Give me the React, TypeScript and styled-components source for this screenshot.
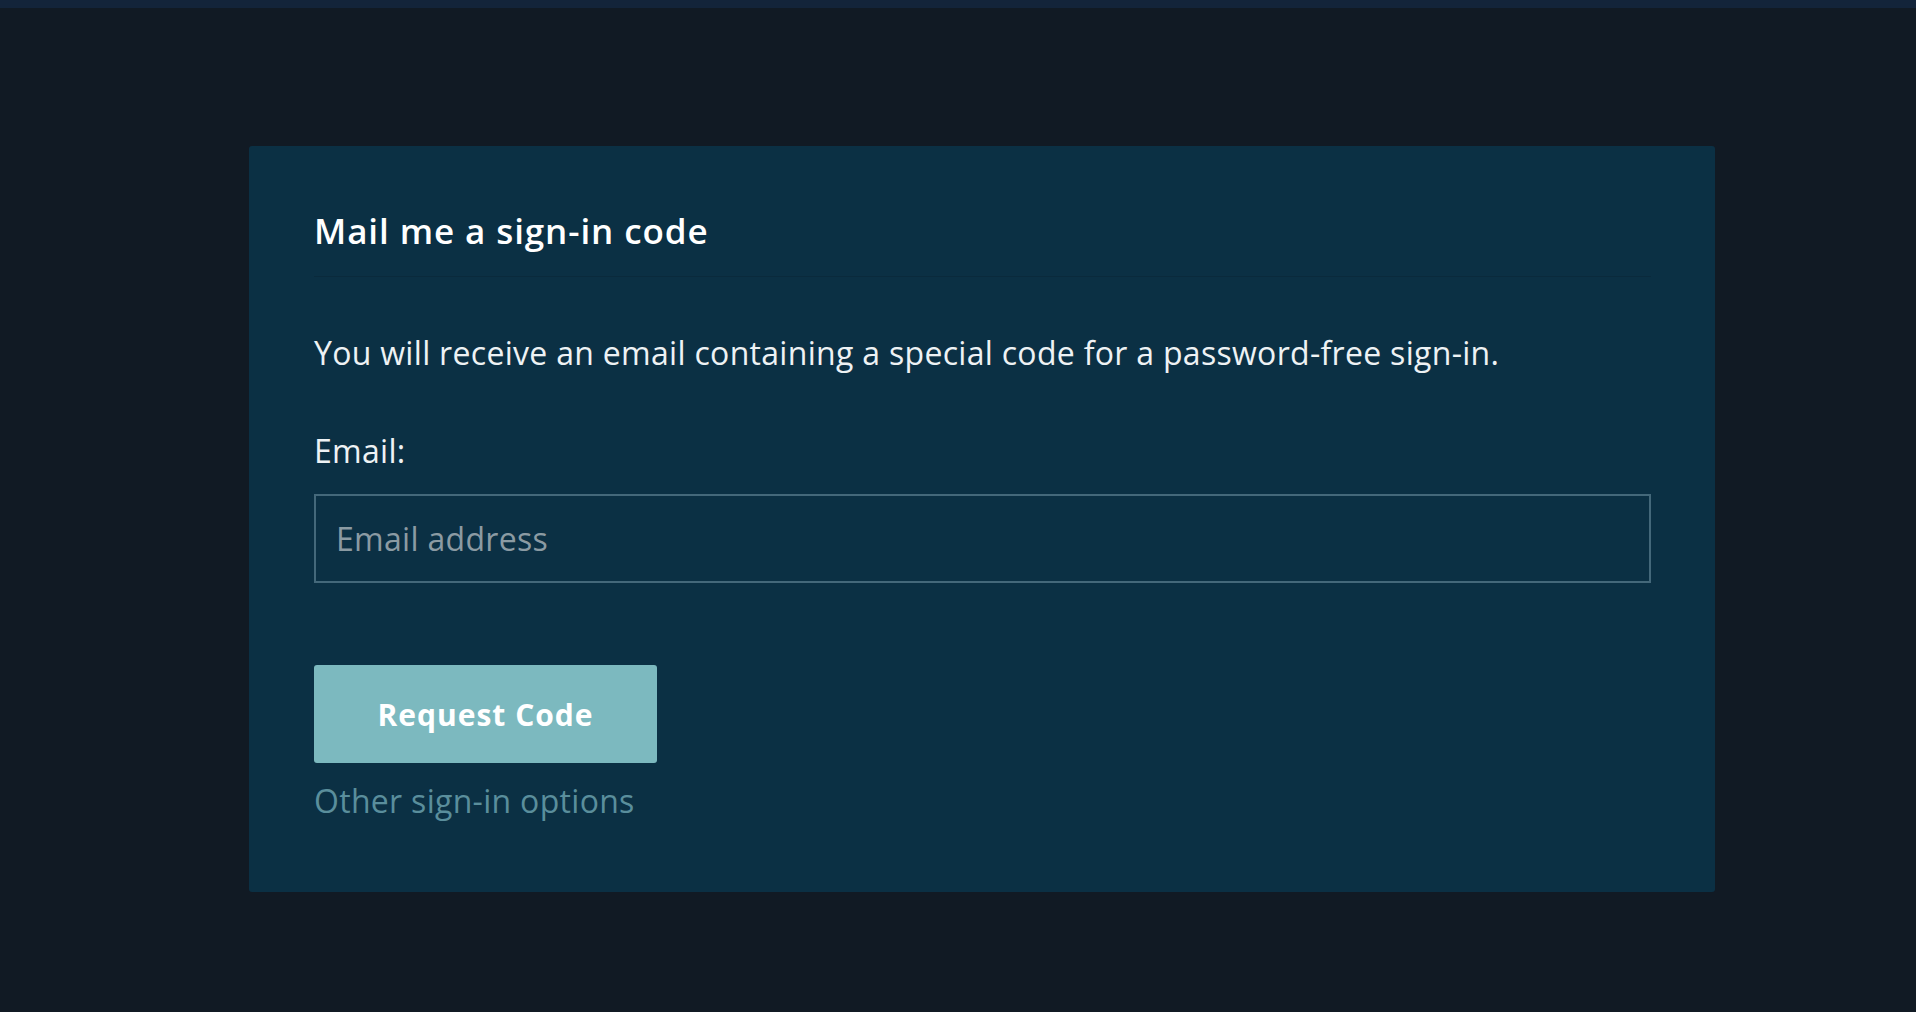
import React from "react";
import styled, { createGlobalStyle } from "styled-components";

const GlobalStyle = createGlobalStyle`
  html, body {
    margin: 0;
    padding: 0;
    background: #111a24;
  }
  body {
    font-family: "Open Sans", Lato, sans-serif;
    color: #f2f5f7;
  }
`;

const App: React.FC = () => {
  return (
    <>
      <GlobalStyle />
      <TopBar />
      <Page>
        <Card>
          <CardHeader>
            <Title>Mail me a sign-in code</Title>
          </CardHeader>
          <Intro>
            You will receive an email containing a special code for a
            password-free sign-in.
          </Intro>
          <Label htmlFor="email">Email:</Label>
          <EmailInput id="email" type="email" placeholder="Email address" />
          <RequestButton type="button">Request Code</RequestButton>
          <OtherLink href="#">Other sign-in options</OtherLink>
        </Card>
      </Page>
    </>
  );
};

export default App;

const TopBar = styled.div`
  height: 8px;
  background: #13243a;
`;

const Page = styled.main`
  padding: 138px 201px 0 249px;
`;

const Card = styled.section`
  display: flex;
  flex-direction: column;
  align-items: flex-start;
  background: #0b3044;
  border-radius: 3px;
  padding: 65px 64px 71px 65px;
`;

const CardHeader = styled.div`
  align-self: stretch;
  padding-bottom: 25px;
  border-bottom: 1px solid #0a2a3c;
`;

const Title = styled.h1`
  margin: 0;
  font-size: 35px;
  line-height: 40px;
  font-weight: 600;
  letter-spacing: 0.9px;
  color: #ffffff;
`;

const Intro = styled.p`
  margin: 56px 0 0;
  font-size: 32px;
  line-height: 40px;
  letter-spacing: 0.3px;
  color: #eef2f4;
`;

const Label = styled.label`
  margin-top: 58px;
  font-size: 32px;
  line-height: 40px;
  letter-spacing: 0.3px;
  color: #eef2f4;
`;

const EmailInput = styled.input`
  align-self: stretch;
  box-sizing: border-box;
  margin-top: 23px;
  height: 89px;
  padding: 0 20px;
  background: transparent;
  border: 2px solid #44687a;
  border-radius: 0;
  font-family: inherit;
  font-size: 32px;
  letter-spacing: 0.3px;
  color: #eef2f4;
  outline: none;

  &::placeholder {
    color: #8b9ba3;
  }
`;

const RequestButton = styled.button`
  margin-top: 82px;
  width: 343px;
  height: 98px;
  border: none;
  border-radius: 3px;
  background: #7cb9bf;
  color: #ffffff;
  font-family: inherit;
  font-size: 30px;
  font-weight: 700;
  letter-spacing: 1px;
  cursor: pointer;
`;

const OtherLink = styled.a`
  margin-top: 18px;
  font-size: 32px;
  line-height: 40px;
  letter-spacing: 0.3px;
  color: #5a8e9c;
  text-decoration: none;
`;
